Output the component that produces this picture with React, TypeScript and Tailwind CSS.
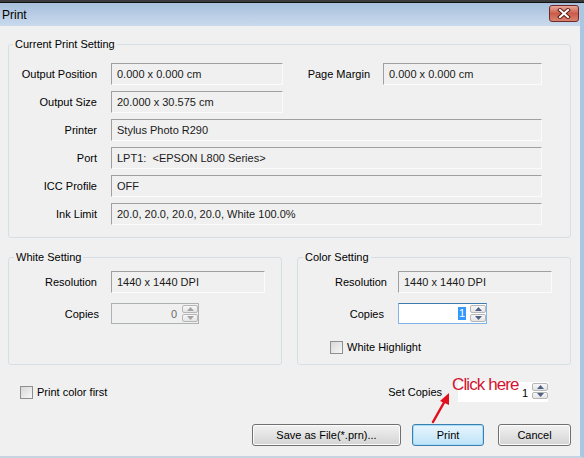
import React from "react";

function Field({ w, children }: { w: string; children?: React.ReactNode }) {
  return (
    <div
      className={`${w} h-[22px] flex items-center px-[5px] border border-t-[#a0a0a0] border-l-[#a0a0a0] border-r-[#fbfbfb] border-b-[#fbfbfb] text-[#1a1a1a] whitespace-pre`}
    >
      {children}
    </div>
  );
}

function Arrow({ up, muted }: { up?: boolean; muted?: boolean }) {
  return (
    <svg width="7" height="4" viewBox="0 0 7 4">
      <path d={up ? "M0 4 L3.5 0 L7 4 Z" : "M0 0 L3.5 4 L7 0 Z"} fill={muted ? "#a3a3a3" : "#4d6185"} />
    </svg>
  );
}

function SpinButtons({ muted }: { muted?: boolean }) {
  return (
    <div className="flex flex-col w-[16px] h-full py-px gap-px">
      <div className="flex-1 flex items-center justify-center border border-[#b6b6b6] rounded-[2px] bg-gradient-to-b from-[#f8f8f8] to-[#e4e4e4]">
        <Arrow up muted={muted} />
      </div>
      <div className="flex-1 flex items-center justify-center border border-[#b6b6b6] rounded-[2px] bg-gradient-to-b from-[#f8f8f8] to-[#e4e4e4]">
        <Arrow muted={muted} />
      </div>
    </div>
  );
}

function CheckBox({ label }: { label: string }) {
  return (
    <div className="flex items-center gap-[4px]">
      <div className="w-[13px] h-[13px] border border-[#8e8f8f] bg-gradient-to-br from-[#d8d8d8] to-[#f7f7f7]" />
      <span>{label}</span>
    </div>
  );
}

function Button({ w, primary, children }: { w: string; primary?: boolean; children: React.ReactNode }) {
  return (
    <div
      className={`${w} h-[22px] flex items-center justify-center rounded-[3px] border ${
        primary
          ? "border-[#3c7fb1] bg-gradient-to-b from-[#e8f5fd] to-[#bee3f8] shadow-[inset_0_0_0_1px_#a6dcf7]"
          : "border-[#707070] bg-gradient-to-b from-[#f2f2f2] to-[#d4d4d4] shadow-[inset_0_0_0_1px_#fcfcfc]"
      }`}
    >
      {children}
    </div>
  );
}

const rows: [string, string][] = [
  ["Printer", "Stylus Photo R290"],
  ["Port", "LPT1:  <EPSON L800 Series>"],
  ["ICC Profile", "OFF"],
  ["Ink Limit", "20.0, 20.0, 20.0, 20.0, White 100.0%"],
];

export default function App() {
  return (
    <div className="relative w-[584px] h-[458px] flex flex-col bg-[#f0f0f0] text-[11px] leading-[14px] text-black font-['Liberation_Sans',Arial,sans-serif] overflow-hidden">
      {/* window behind + title bar */}
      <div className="h-[3px] bg-[#3a3a3a] border-b border-[#111]" />
      <div className="h-[23px] flex items-start bg-gradient-to-b from-[#a8c0dc] to-[#c9daed] border-r-[4px] border-[#a9c6e3]">
        <span className="text-[12px] leading-[16px] mt-[4px] ml-[2px]">Print</span>
        <div className="ml-auto mr-[1px] mt-[2px] w-[30px] h-[17px] rounded-[3px] border border-[#6d2a28] bg-gradient-to-b from-[#e9a99b] via-[#cb5c4a] to-[#d8826e] flex items-center justify-center">
          <svg width="14" height="11" viewBox="0 0 14 11">
            <path d="M3 2 L11 9 M11 2 L3 9" stroke="#5b1c18" strokeWidth="4" strokeLinecap="square" />
            <path d="M3 2 L11 9 M11 2 L3 9" stroke="#ffffff" strokeWidth="2" strokeLinecap="square" />
          </svg>
        </div>
      </div>

      {/* client area */}
      <div className="flex-1 flex flex-col border-r-[4px] border-b-[2px] border-r-[#a9c6e3] border-b-[#c6d4e1]">
        <fieldset className="mt-[11px] ml-[8px] w-[563px] border border-[#d5dfe5] rounded-[3px] pb-[12px]">
          <legend className="ml-[4px] px-[2px]">Current Print Setting</legend>
          <div className="flex flex-col gap-[6px] pt-[12px]">
            <div className="flex items-center">
              <span className="w-[88px] text-right mr-[14px]">Output Position</span>
              <Field w="w-[172px]">0.000 x 0.000 cm</Field>
              <span className="w-[87px] text-right mr-[13px]">Page Margin</span>
              <Field w="w-[159px]">0.000 x 0.000 cm</Field>
            </div>
            <div className="flex items-center">
              <span className="w-[88px] text-right mr-[14px]">Output Size</span>
              <Field w="w-[172px]">20.000 x 30.575 cm</Field>
            </div>
            {rows.map(([k, v]) => (
              <div key={k} className="flex items-center">
                <span className="w-[88px] text-right mr-[14px]">{k}</span>
                <Field w="w-[431px]">{v}</Field>
              </div>
            ))}
          </div>
        </fieldset>

        <div className="flex mt-[12px] ml-[8px] gap-[15px]">
          <fieldset className="w-[274px] border border-[#d5dfe5] rounded-[3px]">
            <legend className="ml-[5px] px-[2px]">White Setting</legend>
            <div className="flex flex-col gap-[10px] pt-[7px]">
              <div className="flex items-center">
                <span className="w-[88px] text-right mr-[14px]">Resolution</span>
                <Field w="w-[154px]">1440 x 1440 DPI</Field>
              </div>
              <div className="flex items-center">
                <span className="w-[90px] text-right mr-[12px]">Copies</span>
                <div className="w-[88px] h-[21px] flex items-center border border-[#adb2b5] bg-[#f0f0f0]">
                  <span className="flex-1 text-right pr-[5px] text-[#6d6d6d]">0</span>
                  <SpinButtons muted />
                </div>
              </div>
            </div>
          </fieldset>

          <fieldset className="w-[274px] border border-[#d5dfe5] rounded-[3px] pb-[10px]">
            <legend className="ml-[5px] px-[2px]">Color Setting</legend>
            <div className="flex flex-col pt-[7px]">
              <div className="flex items-center">
                <span className="w-[89px] text-right mr-[11px]">Resolution</span>
                <Field w="w-[154px]">1440 x 1440 DPI</Field>
              </div>
              <div className="flex items-center mt-[10px]">
                <span className="w-[86px] text-right mr-[14px]">Copies</span>
                <div className="w-[89px] h-[21px] flex items-center border border-[#7eb4ea] border-t-[#3d7bad] bg-white">
                  <span className="flex-1 flex justify-end pr-[4px]">
                    <span className="bg-[#3399ff] text-white px-px leading-[13px]">1</span>
                  </span>
                  <SpinButtons />
                </div>
              </div>
              <div className="mt-[16px] pl-[32px]">
                <CheckBox label="White Highlight" />
              </div>
            </div>
          </fieldset>
        </div>

        <div className="flex items-center h-[20px] mt-[17px] pl-[20px] pr-[32px]">
          <CheckBox label="Print color first" />
          <span className="ml-auto mr-[16px]">Set Copies</span>
          <div className="w-[90px] h-[20px] flex items-end pb-[2px] bg-white">
            <span className="flex-1 text-right pr-[4px]">1</span>
            <SpinButtons />
          </div>
        </div>

        <div className="flex justify-end mt-[22px] pr-[9px]">
          <Button w="w-[149px]">Save as File(*.prn)...</Button>
          <div className="w-[11px]" />
          <Button w="w-[72px]" primary>
            Print
          </Button>
          <div className="w-[14px]" />
          <Button w="w-[73px]">Cancel</Button>
        </div>
      </div>

      {/* annotation overlay */}
      <span className="absolute left-[452px] top-[375px] text-[17px] leading-[20px] tracking-[-0.9px] text-[#d2132f]">
        Click here
      </span>
      <svg className="absolute left-[425px] top-[388px]" width="32" height="40" viewBox="0 0 32 40">
        <path d="M8 34 L21 11" stroke="#e0101e" strokeWidth="2.5" strokeLinecap="round" />
        <path d="M24 5 L15 13 L24 17 Z" fill="#e0101e" />
      </svg>
    </div>
  );
}
